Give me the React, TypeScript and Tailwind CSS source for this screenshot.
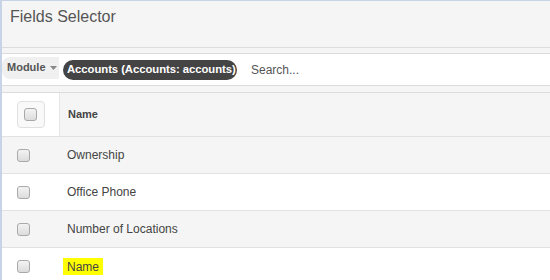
import React from "react";

const Box = () => (
  <div className="w-[13px] h-[13px] rounded-[3px] border border-[#a9a9a9] bg-[linear-gradient(#f3f3f3,#dcdcdc)]" />
);

export default function App() {
  const rows = [
    { label: "Ownership", bg: "bg-[#f5f5f5]" },
    { label: "Office Phone", bg: "bg-white" },
    { label: "Number of Locations", bg: "bg-[#f5f5f5]" },
  ];
  return (
    <div
      className="w-[550px] h-[280px] overflow-hidden bg-[#f5f5f5] border-t border-l-2 border-[#c7d3e6] text-[#555]"
      style={{ fontFamily: '"Liberation Sans", Arial, sans-serif' }}
    >
      <div className="h-[46px] pl-[8px] pt-[4px] text-[16px] text-[#555]">Fields Selector</div>
      <div className="h-[6px] border-t border-[#dcdcdc]" />
      <div className="h-[33px] bg-white border-y border-[#dcdcdc] flex items-center">
        <div className="h-[22px] w-[57px] bg-[#f0f0f0] rounded-l-[8px] flex items-center pl-[5px] gap-[4px] -mt-[4px]">
          <span className="text-[11px] font-bold text-[#555]">Module</span>
          <svg width="7" height="4" viewBox="0 0 7 4"><path d="M0 0h7L3.5 4z" fill="#888" /></svg>
        </div>
        <div className="ml-[4px] h-[20px] w-[174px] pl-[4px] rounded-full bg-[#444] text-white text-[11.3px] font-bold flex items-center tracking-[-0.05px]">
          Accounts (Accounts: accounts)
        </div>
        <div className="ml-[14px] text-[12px] text-[#555]">Search...</div>
      </div>
      <div className="h-[6px]" />
      <div className="border-t border-[#dcdcdc]">
        <div className="h-[44px] flex border-b border-[#e2e2e2]">
          <div className="w-[58px] bg-white border-r border-[#e6e6e6] flex items-center justify-center">
            <div className="w-[28px] h-[27px] border border-[#e0e0e0] rounded-[4px] bg-[#f9f9f9] flex items-center justify-center">
              <Box />
            </div>
          </div>
          <div className="flex-1 flex items-center pl-[8px] text-[11px] font-bold text-[#444]">Name</div>
        </div>
        {rows.map((r) => (
          <div key={r.label} className={`h-[37px] flex items-center border-b border-[#e2e2e2] ${r.bg}`}>
            <div className="w-[58px] pl-[15px]"><Box /></div>
            <div className="pl-[7px] text-[12px] text-[#444]">{r.label}</div>
          </div>
        ))}
        <div className="h-[37px] flex items-center bg-white">
          <div className="w-[58px] pl-[15px]"><Box /></div>
          <div className="ml-[3px] px-[4px] h-[17px] bg-[#ffff00] flex items-center text-[12px] text-[#444]">Name</div>
        </div>
      </div>
    </div>
  );
}
